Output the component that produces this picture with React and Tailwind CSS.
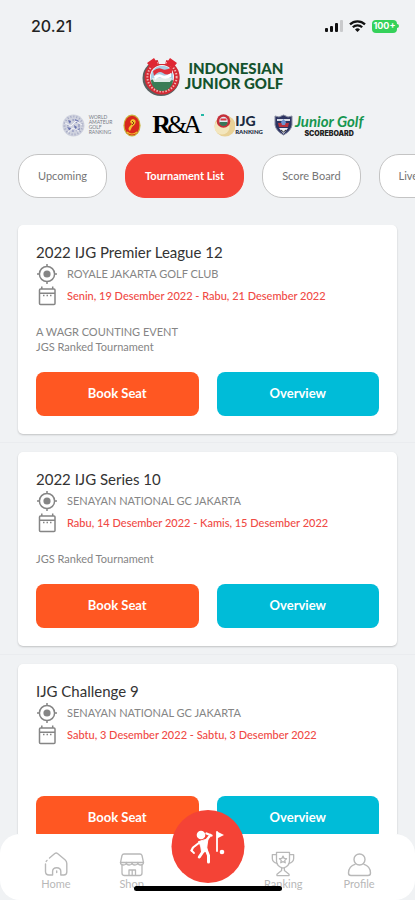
import React from 'react';

const tabs = ['Upcoming', 'Tournament List', 'Score Board', 'Live Score'];

const tournaments = [
  {
    title: '2022 IJG Premier League 12',
    place: 'ROYALE JAKARTA GOLF CLUB',
    date: 'Senin, 19 Desember 2022 - Rabu, 21 Desember 2022',
    notes: ['A WAGR COUNTING EVENT', 'JGS Ranked Tournament'],
  },
  {
    title: '2022 IJG Series 10',
    place: 'SENAYAN NATIONAL GC JAKARTA',
    date: 'Rabu, 14 Desember 2022 - Kamis, 15 Desember 2022',
    notes: ['JGS Ranked Tournament'],
  },
  {
    title: 'IJG Challenge 9',
    place: 'SENAYAN NATIONAL GC JAKARTA',
    date: 'Sabtu, 3 Desember 2022 - Sabtu, 3 Desember 2022',
    notes: [''],
  },
];

const StatusBar = () => (
  <div className="flex h-[52px] shrink-0 items-center justify-between pl-[31px] pr-4">
    <span className="font-['Inter'] text-[16px] font-medium text-[#222]">20.21</span>
    <div className="flex items-center gap-[6px]">
      <svg width="18" height="12" viewBox="0 0 18 12">
        <rect x="0" y="8" width="3" height="4" rx="1" fill="#111" />
        <rect x="5" y="6" width="3" height="6" rx="1" fill="#111" />
        <rect x="10" y="3" width="3" height="9" rx="1" fill="#111" />
        <rect x="15" y="0" width="3" height="12" rx="1" fill="#c9cacc" />
      </svg>
      <svg width="17" height="12" viewBox="0 0 17 12" fill="none" stroke="#111" strokeWidth="2.2">
        <path d="M1 4.4a10.6 10.6 0 0 1 15 0" />
        <path d="M3.8 7.3a6.6 6.6 0 0 1 9.4 0" />
        <path d="M8.5 12 6 9.4a3.6 3.6 0 0 1 5 0z" fill="#111" stroke="none" />
      </svg>
      <div className="flex items-center">
        <span className="flex h-[13px] w-[25px] items-center justify-center rounded-[4px] bg-[#35d15a] font-['Inter'] text-[9px] font-bold text-white">
          100+
        </span>
        <span className="h-1 w-[2px] rounded-r bg-[#35d15a]" />
      </div>
    </div>
  </div>
);

const Emblem = ({ size }) => (
  <svg width={size} height={size} viewBox="0 0 40 40">
    <ellipse cx="19" cy="22" rx="18.5" ry="18" fill="#59605f" />
    <circle cx="20" cy="21" r="17.5" fill="#d32a34" />
    <circle cx="20" cy="21" r="14.6" fill="none" stroke="#f3b9b6" strokeWidth="2" strokeDasharray="1.4 1.6" />
    <circle cx="20" cy="21" r="12" fill="#fff" />
    <circle cx="20" cy="21" r="11.2" fill="#a9cfe4" />
    <path d="M9 24q5-2 11 0t11 0a11 11 0 0 1-22 0z" fill="#3a7d56" />
    <path d="M10 22h20l-2 4H12z" fill="#dfece8" />
    <path d="M11 15q5-4 9-2t10-2v6q-5 3-9 0t-9 3z" fill="#e0303a" />
    <path d="M12 20q5-3 8-1t9-2v4q-5 3-9 1t-7 2z" fill="#fff" />
    <path d="M5 7 12 2l4 6-7 4zM35 7l-7-5-4 6 7 4z" fill="#df2733" />
    <path d="M15 2h10l-2 6h-6z" fill="#f1f2f4" />
  </svg>
);

const Brand = () => (
  <div className="flex items-center justify-center gap-[3px] pl-[10px]">
    <Emblem size={40} />
    <div className="text-right font-['Lato'] text-[15px] leading-[15px] font-black text-[#14532d]">
      <div>INDONESIAN</div>
      <div>JUNIOR GOLF</div>
    </div>
  </div>
);

const Partners = () => (
  <div className="flex h-[30px] items-center justify-center gap-[11px] pl-[10px]">
    <div className="flex items-center gap-1">
      <svg width="23" height="23" viewBox="0 0 23 23">
        <circle cx="11.5" cy="11.5" r="11" fill="#cfd2de" />
        <circle cx="11.5" cy="11.5" r="9" fill="none" stroke="#a4a9c4" strokeWidth="2" strokeDasharray="1 2" />
        <circle cx="11.5" cy="11.5" r="5.5" fill="none" stroke="#a3a8c8" strokeWidth="2" strokeDasharray="2 2" />
        <path d="M6 6l3 1-1 3zM13 5l4 2-3 2zM5 13l4 1-1 3zM12 11l3 2-2 3zM16 15l2-1-1 3z" fill="#6670ad" />
        <path d="M3 9l6 3 5-5 6 4M6 18l5-4 6 3" fill="none" stroke="#f4f5fa" strokeWidth="1" />
      </svg>
      <div className="font-['Lato'] text-[5px] leading-[5px] text-[#777b84]">
        <div>WORLD</div>
        <div>AMATEUR</div>
        <div>GOLF</div>
        <div>RANKING</div>
      </div>
    </div>
    <svg width="18" height="23" viewBox="0 0 18 23">
      <ellipse cx="9" cy="11.5" rx="8.6" ry="11" fill="#c9b23a" />
      <ellipse cx="9" cy="11.5" rx="7.4" ry="9.8" fill="#d8281d" />
      <path d="M10 5q4 1 2 5l-3 3-2 4q-3-2 0-5l2-2-2-2q1-3 3-3z" fill="#f3c22d" />
      <path d="M9 7l2 2-2 2" stroke="#7a3d12" strokeWidth="1" fill="none" />
      <path d="M4 18q5 4 10 0" stroke="#f3c22d" strokeWidth="1.2" fill="none" />
    </svg>
    <div className="relative font-['Liberation_Serif'] text-[26px] leading-[30px] text-black">
      <span className="font-bold">R</span>
      <span className="-ml-1">&amp;</span>
      <span className="-ml-1">A</span>
      <span className="absolute top-1 -right-[2px] h-[2px] w-[3px] bg-[#22b8a6]" />
    </div>
    <div className="flex items-center">
      <svg width="22" height="24" viewBox="0 0 22 24">
        <circle cx="12" cy="13" r="10.5" fill="#e9d196" />
        <circle cx="9" cy="14" r="7.5" fill="#f3e6bd" />
        <circle cx="10.5" cy="8" r="6.8" fill="#c5303a" />
        <circle cx="10.5" cy="8" r="4.2" fill="#dcecf3" />
        <path d="M6.5 9h8a4 4 0 0 1-8 0z" fill="#39775a" />
        <path d="M7.5 5.5h6v2h-6z" fill="#de3541" />
      </svg>
      <div className="font-['Lato'] font-black text-[#1b2a41]">
        <div className="text-[14px] leading-[14px]">IJG</div>
        <div className="text-[6px] leading-[8px]">RANKING</div>
      </div>
    </div>
    <div className="flex items-center gap-[2px]">
      <svg width="19" height="22" viewBox="0 0 19 22">
        <path d="M1 2l4 1 4.500-2 4.500 2 4-1v9q-1 6-8.500 10Q2 17 1 11z" fill="#2c3360" stroke="#888da2" strokeWidth="1" />
        <path d="M3 5h13v2H3z" fill="#d9dce6" />
        <path d="M4 9h11l-1 4H5z" fill="#b8323c" />
        <path d="M7 8l2.500-3L12 8l-1 3H8z" fill="#6e93cf" />
        <path d="M5 14h9l-4.500 6z" fill="#eceef3" />
        <path d="M7 16l2.500 2 2.500-2" stroke="#222" fill="none" />
      </svg>
      <div className="text-center">
        <div className="font-['Lato'] text-[15px] leading-[18px] font-bold text-[#16964f] italic">Junior Golf</div>
        <div className="font-['Inter'] text-[7px] leading-[8px] font-black text-[#222]">SCOREBOARD</div>
      </div>
    </div>
  </div>
);

const TargetIcon = () => (
  <svg width="22" height="22" viewBox="0 0 22 22" fill="none" stroke="#858585" strokeWidth="1.5">
    <circle cx="11" cy="11" r="3.6" fill="#858585" stroke="none" />
    <circle cx="11" cy="11" r="7.6" />
    <path d="M11 1v3M11 18v3M1 11h3M18 11h3" />
  </svg>
);

const CalendarIcon = () => (
  <svg width="22" height="22" viewBox="0 0 22 22" fill="none" stroke="#858585" strokeWidth="1.5">
    <rect x="3.500" y="4" width="15.500" height="15.500" rx="1" />
    <path d="M3.500 8.200H19M5.800 1.500V4M16.700 1.500V4" />
    <path d="M7 10.500h1.500M10.500 10.500H12M14 10.500h1.500" />
  </svg>
);

const TournamentCard = ({ item }) => (
  <article className="mx-[18px] rounded-[5px] bg-white px-[18px] pt-4 pb-[18px] shadow-[0_1px_2px_rgba(0,0,0,0.2)]">
    <h2 className="text-[15px] leading-[22px] text-[#333]">{item.title}</h2>
    <div className="flex h-[22px] items-center gap-[9px]">
      <TargetIcon />
      <span className="text-[11px] text-[#858585]">{item.place}</span>
    </div>
    <div className="flex h-[22px] items-center gap-[9px]">
      <CalendarIcon />
      <span className="text-[11px] font-medium text-[#f04a45]">{item.date}</span>
    </div>
    <div className="mt-[17px] text-[11px] leading-[15px] text-[#858585]">
      {item.notes.map((note, i) => (
        <p key={i} className="min-h-[15px]">{note}</p>
      ))}
    </div>
    <div className="mt-[18px] grid grid-cols-2 gap-[18px] text-[13px] font-bold text-white">
      <button className="h-11 rounded-[8px] bg-[#ff5722]">Book Seat</button>
      <button className="h-11 rounded-[8px] bg-[#00bcd8]">Overview</button>
    </div>
  </article>
);

const HomeIcon = () => (
  <svg width="26" height="26" viewBox="0 0 26 26" fill="none" stroke="#b8b8b8" strokeWidth="1.4" strokeLinecap="round" strokeLinejoin="round">
    <path d="M6.500 7 11.800 2.500q1.400-1.100 2.700 0L22 8.700q1.800 1.600 1.800 3.800V21q0 3-3 3h-3v-3.500q0-3.800-4.100-3.800t-4.100 3.800V24H6q-3.500 0-3.500-3.500V13" />
    <path d="M3.200 10.400l.8-1M13.700 20v1.500" />
  </svg>
);

const ShopIcon = () => (
  <svg width="26" height="26" viewBox="0 0 26 26" fill="none" stroke="#b8b8b8" strokeWidth="1.3" strokeLinecap="round" strokeLinejoin="round">
    <path d="M5 3h16q1.500 0 2 1.500l1.500 7H1.500l1.500-7Q3.500 3 5 3z" />
    <path d="M1.500 11.500q0 2.500 2.900 2.500t2.900-2.500q0 2.500 2.900 2.500t2.800-2.500q0 2.500 2.900 2.500t2.900-2.500q0 2.500 2.800 2.500t2.900-2.500" />
    <path d="M3 14v8q0 2.500 2.500 2.500h15Q23 24.500 23 22v-8M10 24v-5h6.500v5M13.200 19v5" />
  </svg>
);

const RankingIcon = () => (
  <svg width="26" height="26" viewBox="0 0 26 28" fill="none" stroke="#b8b8b8" strokeWidth="1.4" strokeLinecap="round" strokeLinejoin="round">
    <path d="M6 1.500h14v9q0 6-7 8-7-2-7-8zM6 4H1.500v4q0 4 5.500 5.500M20 4h4.500v4q0 4-5.500 5.500" />
    <path d="M13 5.500l1.200 2.400 2.600.4-1.900 1.800.5 2.600-2.400-1.200-2.400 1.200.5-2.600-1.900-1.800 2.600-.4z" />
    <path d="M11.500 18.500v2.500L6.500 25v1.500h13V25l-5-4v-2.500" />
  </svg>
);

const ProfileIcon = () => (
  <svg width="26" height="26" viewBox="0 0 26 26" fill="none" stroke="#b8b8b8" strokeWidth="1.4" strokeLinejoin="round">
    <circle cx="13.500" cy="8.500" r="5.500" />
    <path d="M9.500 13.200Q2.500 15.500 2.500 22q0 2.500 2.500 2.500h17q2.500 0 2.500-2.500 0-6.500-7-8.800" />
  </svg>
);

const GolferIcon = () => (
  <svg width="36" height="36" viewBox="0 0 36 36" fill="none" stroke="#fff" strokeLinecap="round" strokeLinejoin="round">
    <circle cx="11.500" cy="6" r="4.300" fill="#fff" stroke="none" />
    <path d="M10 13.500 3.500 18.500 2 21.500" strokeWidth="2.200" />
    <path d="M2 21.500l2.500 2.500" strokeWidth="1.800" />
    <path d="M15.500 13 21 6M17 4.500l5 2" strokeWidth="2.400" />
    <path d="M9.500 12.500q4-1.500 9-2.500l-.8 5q-.8 3 .2 7l-5.800 1.500q-.2-5.500-2.600-11z" fill="#fff" strokeWidth="1" />
    <path d="M13.500 22.500 9.800 28" strokeWidth="3" />
    <path d="M17 21.500l2 5v6.500" strokeWidth="3" />
    <path d="M27.500 3v19" strokeWidth="1.800" />
    <path d="M27.500 2.500 34.500 6l-7 3.500z" fill="#fff" stroke="none" />
    <circle cx="32.500" cy="23" r="2.300" fill="#fff" stroke="none" />
  </svg>
);

const NavItem = ({ icon, label }) => (
  <button className="flex flex-col items-center">
    <span className="flex h-[26px] items-center">{icon}</span>
    <span className="text-[11px] leading-[14px] text-[#b8b8b8]">{label}</span>
  </button>
);

const BottomNav = () => (
  <nav className="relative grid h-[66px] shrink-0 grid-cols-5 items-start rounded-[20px] bg-white px-[18px] pt-[17px]">
    <NavItem icon={<HomeIcon />} label="Home" />
    <NavItem icon={<ShopIcon />} label="Shop" />
    <span />
    <NavItem icon={<RankingIcon />} label="Ranking" />
    <NavItem icon={<ProfileIcon />} label="Profile" />
    <button
      aria-label="Play"
      className="absolute -top-6 left-1/2 flex size-[73px] -translate-x-1/2 items-center justify-center rounded-full bg-[#f44336]"
    >
      <GolferIcon />
    </button>
    <span className="absolute bottom-[9px] left-1/2 h-[5px] w-[148px] -translate-x-1/2 rounded-full bg-black" />
  </nav>
);

const App = () => {
  return (
    <div className="flex h-screen flex-col overflow-hidden bg-[#f0f2f4] font-['Lato','Noto_Sans',sans-serif]">
      <StatusBar />
      <header className="flex shrink-0 flex-col gap-[14px] pt-1">
        <Brand />
        <Partners />
        <div className="flex gap-[18px] overflow-hidden pl-[18px]">
          {tabs.map((tab) => (
            <button
              key={tab}
              className={
                tab === 'Tournament List'
                  ? 'h-11 shrink-0 rounded-[20px] border border-[#f44336] bg-[#f44336] px-[19px] text-[11px] font-bold text-white'
                  : 'h-11 shrink-0 rounded-[20px] border border-[#c4c4c4] bg-white px-[19px] text-[11px] text-[#757575]'
              }
            >
              {tab}
            </button>
          ))}
        </div>
      </header>
      <main className="mt-[27px] min-h-0 flex-1 overflow-hidden">
        {tournaments.map((item) => (
          <div key={item.title} className="mb-[9px] border-b border-[#eaecef] pb-2">
            <TournamentCard item={item} />
          </div>
        ))}
      </main>
      <BottomNav />
    </div>
  );
};

export default App;
